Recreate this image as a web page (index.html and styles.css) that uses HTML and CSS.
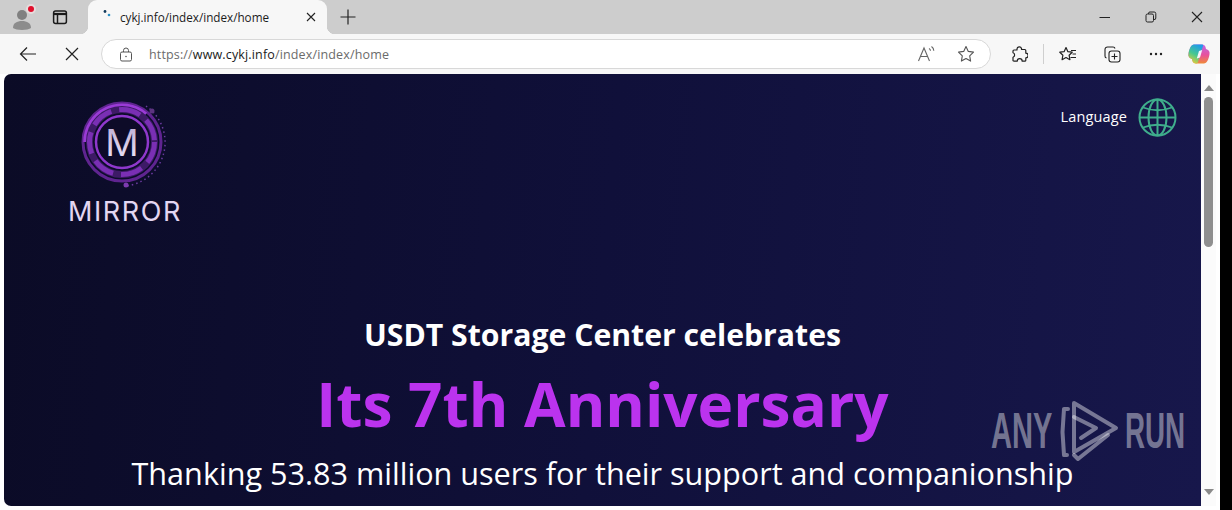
FILE: index.html
```html
<!DOCTYPE html>
<html lang="en">
<head>
<meta charset="utf-8">
<title>cykj.info/index/index/home</title>
<link rel="stylesheet" href="styles.css">
</head>
<body>
<div class="window">
  <div class="tabstrip">
    <div class="btn avatar-btn">
      <svg width="30" height="30" viewBox="0 0 30 30"><circle cx="15" cy="13" r="5" fill="#808080"/><path d="M6 26c0-5 4-7 9-7s9 2 9 7c-3 2.500-15 2.500-18 0z" fill="#8c8c8c"/><circle cx="24" cy="7" r="5" fill="#e6dcdc"/><circle cx="24" cy="7" r="3" fill="#e0102c"/></svg>
    </div>
    <div class="btn panel-btn">
      <svg width="16" height="16" viewBox="0 0 16 16" fill="none" stroke="#1a1a1a" stroke-width="1.500"><rect x="1.600" y="2" width="12.800" height="12.400" rx="2"/><path d="M1.600 5h12.800" stroke-width="2.200"/><path d="M5.500 5v9"/></svg>
    </div>
    <div class="tab">
      <svg class="favicon" width="12" height="12" viewBox="0 0 12 12"><circle cx="3" cy="2.500" r="1.400" fill="#123a5c"/><circle cx="7" cy="6" r="1.300" fill="#2a8fc4"/></svg>
      <span class="tab-title">cykj.info/index/index/home</span>
      <svg class="tab-close" width="10" height="10" viewBox="0 0 10 10" stroke="#222" stroke-width="1.100"><path d="M1 1l8 8M9 1l-8 8"/></svg>
    </div>
    <div class="btn newtab-btn">
      <svg width="16" height="16" viewBox="0 0 16 16" stroke="#222" stroke-width="1.200"><path d="M8 .5v15M.5 8h15"/></svg>
    </div>
    <div class="spacer"></div>
    <div class="winctl"><svg width="12" height="12" viewBox="0 0 12 12" stroke="#222"><path d="M.5 6.500h10.500"/></svg></div>
    <div class="winctl"><svg width="12" height="12" viewBox="0 0 12 12" fill="none" stroke="#222"><rect x="1" y="3" width="7.500" height="8" rx="1.500"/><path d="M3.500 3V2.200A1.400 1.400 0 0 1 5 1h4.200A1.600 1.600 0 0 1 10.800 2.600V7A1.500 1.500 0 0 1 9 8.500"/></svg></div>
    <div class="winctl"><svg width="12" height="12" viewBox="0 0 12 12" stroke="#222" stroke-width="1.100"><path d="M1 1l10 10M11 1L1 11"/></svg></div>
  </div>

  <div class="toolbar">
    <div class="btn tool">
      <svg width="18" height="16" viewBox="0 0 18 16" fill="none" stroke="#222" stroke-width="1.200"><path d="M17 8H1.500M8 1.500L1.500 8 8 14.500"/></svg>
    </div>
    <div class="btn tool">
      <svg width="14" height="14" viewBox="0 0 14 14" stroke="#222" stroke-width="1.200"><path d="M1 1l12 12M13 1L1 13"/></svg>
    </div>
    <div class="address">
      <svg class="lock" width="14" height="15" viewBox="0 0 14 15" fill="none" stroke="#555"><rect x="1.500" y="5" width="11" height="9" rx="1.500"/><path d="M4.500 5V3.500a2.500 2.500 0 0 1 5 0V5"/><circle cx="7" cy="9.500" r=".8" fill="#555" stroke="none"/></svg>
      <span class="url"><span class="url-dim">https://</span><span class="url-host">www.cykj.info</span><span class="url-dim">/index/index/home</span></span>
      <svg class="read" width="20" height="18" viewBox="0 0 20 18" fill="none" stroke="#666" stroke-width="1.100"><path d="M1.500 16L7 3l5.500 13M3.500 11.500h7"/><path d="M12 3.500c1 .5 1.500 1.300 1.500 2.300M14.500 1.500c1.500 1 2.300 2.500 2.300 4.300"/></svg>
      <svg class="fav" width="18" height="18" viewBox="0 0 18 18" fill="none" stroke="#555" stroke-width="1.100"><path d="M9 1.500l2.300 4.900 5.200.7-3.800 3.700.9 5.300L9 13.500l-4.600 2.600.9-5.300L1.500 7.100l5.200-.7z" stroke-linejoin="round"/></svg>
    </div>
    <div class="btn tool ext">
      <svg width="17" height="17" viewBox="0 0 17 17" fill="none" stroke="#222" stroke-width="1.200" stroke-linejoin="round"><path d="M6 3a2.300 2.300 0 0 1 4.500-.5c.1.400.1.600 0 1h3.300c.6 0 1 .4 1 1v2.700a2.300 2.300 0 0 1 0 4.600v2.400c0 .6-.4 1-1 1h-2.600a2.500 2.500 0 0 0-5 0H3c-.6 0-1-.4-1-1v-3a2.300 2.300 0 0 0 0-4.400V5c0-.6.400-1 1-1h3z"/></svg>
    </div>
    <div class="divider"></div>
    <div class="btn tool">
      <svg width="18" height="17" viewBox="0 0 18 17" fill="none" stroke="#222" stroke-width="1.200" stroke-linejoin="round"><path d="M7 1.500l1.900 4.200 4.300.5-3.100 3 .8 4.500L7 11.500l-3.900 2.200.8-4.500-3.100-3 4.300-.5z"/><path d="M12 4.500h5M13.500 8h3.500M11.500 11.500H17" stroke-width="1"/></svg>
    </div>
    <div class="btn tool">
      <svg width="17" height="17" viewBox="0 0 17 17" fill="none" stroke="#222" stroke-width="1.100"><path d="M2.500 12A2 2 0 0 1 1 10V3.500A2.500 2.500 0 0 1 3.500 1H9a2 2 0 0 1 2 1.500"/><rect x="5" y="5" width="11" height="11" rx="2.500"/><path d="M10.500 7.500v6M7.500 10.500h6"/></svg>
    </div>
    <div class="btn tool">
      <svg width="14" height="4" viewBox="0 0 14 4" fill="#222"><circle cx="2" cy="2" r="1.200"/><circle cx="7" cy="2" r="1.200"/><circle cx="12" cy="2" r="1.200"/></svg>
    </div>
    <div class="btn copilot">
      <svg width="22" height="22" viewBox="0 0 22 22">
        <defs>
          <linearGradient id="cpa" x1="0.600" y1="0" x2="0.200" y2="1"><stop offset="0" stop-color="#1f9be8"/><stop offset=".5" stop-color="#46c890"/><stop offset="1" stop-color="#f2cf30"/></linearGradient>
          <linearGradient id="cpb" x1="0.500" y1="0" x2="0.500" y2="1"><stop offset="0" stop-color="#b86ae8"/><stop offset=".55" stop-color="#e8509c"/><stop offset="1" stop-color="#f08a38"/></linearGradient>
        </defs>
        <path d="M7 1.500h7c2 0 3 1 3.500 2.500L18 6c2.500 .5 4 2.500 3.500 5-.5 4-2 8-4 9-1 .5-2 .5-3 .5H8c-2 0-3-1-3.500-2.500L4 16C1.500 15.500 0 13.500 .5 11c.5-4 2-8 4-9 1-.5 1.500-.5 2.500-.5z" fill="url(#cpb)"/>
        <path d="M7 1.500h7c1 0 1.300 .6 1 1.500L10 19c-.4 1-1 1.500-2 1.500-2 0-3-1-3.500-2.500L4 16C1.500 15.500 0 13.500 .5 11c.5-4 2-8 4-9 1-.5 1.500-.5 2.500-.5z" fill="url(#cpa)"/>
        <path d="M11 8l3.200-1-2.200 7.500-3.200 1z" fill="#f7f4fc"/>
      </svg>
    </div>
  </div>

  <div class="content">
    <main class="page">
      <header class="page-head">
        <div class="brand">
          <svg class="emblem" width="92" height="92" viewBox="0 0 92 92" fill="none">
            <defs>
              <linearGradient id="mgrad" x1="0" y1="0" x2="0" y2="1"><stop offset="0" stop-color="#b8a6cf"/><stop offset="1" stop-color="#f1e9fa"/></linearGradient>
            </defs>
            <circle cx="42" cy="45" r="39" stroke="#5f2490" stroke-width="3"/>
            <path d="M5 45A37 37 0 0 1 66 17" stroke="#9a3bd6" stroke-width="3.500"/>
            <circle cx="42" cy="45" r="32.500" stroke="#3d1a66" stroke-width="7"/>
            <circle cx="42" cy="45" r="32.500" stroke="#7a2fb4" stroke-width="5" stroke-dasharray="22 8"/>
            <circle cx="42" cy="45" r="26" fill="#0d0b28" stroke="#8f38cc" stroke-width="2.500"/>
            <text x="42" y="58.500" class="emblem-m" fill="url(#mgrad)">M</text>
            <path d="M66 9A44 44 0 0 1 46 89" stroke="#6a3a9e" stroke-width="1.500" stroke-dasharray="1.500 3"/>
            <circle cx="72" cy="14" r="2.500" fill="#5c3480"/>
            <circle cx="46" cy="88" r="2.500" fill="#7c3bb0"/>
          </svg>
          <div class="brand-name">MIRROR</div>
        </div>
        <div class="lang">
          <span class="lang-text">Language</span>
          <svg width="39" height="39" viewBox="0 0 39 39" fill="none" stroke="#3fae8c" stroke-width="2"><circle cx="19.500" cy="19.500" r="18"/><ellipse cx="19.500" cy="19.500" rx="9" ry="18"/><path d="M19.500 1.500v36M1.500 19.500h36"/><path d="M5 9.500Q19.500 15 34 9.500M5 29.500Q19.500 24 34 29.500" stroke-width="1.800"/></svg>
        </div>
      </header>
      <section class="hero">
        <h1 class="hero-top">USDT Storage Center celebrates</h1>
        <h2 class="hero-main">Its 7th Anniversary</h2>
        <p class="hero-sub">Thanking 53.83 million users for their support and companionship</p>
      </section>
      <div class="watermark">
        <span class="wm-text wm-any">ANY</span>
        <svg class="wm-icon" width="60" height="64" viewBox="0 0 60 64" fill="none" stroke="#fff" stroke-opacity=".42" stroke-width="4" stroke-linejoin="round" stroke-linecap="round"><path d="M8 10H4L2.500 33 4 56h3"/><path d="M14 4L56 29 14 53z"/><path d="M14 18L36 29 21 39"/><path d="M48 36L18 60 14 56"/></svg>
        <span class="wm-text wm-run">RUN</span>
      </div>
    </main>
    <div class="scrollbar">
      <div class="arrow-up"></div>
      <div class="thumb"></div>
      <div class="track"></div>
      <div class="arrow-down"></div>
    </div>
  </div>
</div>
</body>
</html>
```
FILE: styles.css
```css
* { box-sizing: border-box; }
html, body { margin: 0; height: 100%; overflow: hidden; background: #000; }
body { font-family: "Open Sans", "Noto Sans", sans-serif; }
.window { width: 1220px; height: 510px; display: flex; flex-direction: column; background: #f7f7f7; }

.tabstrip { flex: 0 0 34px; display: flex; align-items: center; background: #cdcdcd; }
.btn { display: flex; align-items: center; justify-content: center; height: 100%; }
.avatar-btn { width: 44px; }
.panel-btn { width: 32px; }
.newtab-btn { width: 42px; }
.spacer { flex: 1; }
.winctl { width: 46px; height: 100%; display: flex; align-items: center; justify-content: center; }
.tab { position: relative; flex: 0 0 239px; height: 100%; margin-left: 12px; display: flex; align-items: center; background: #f7f7f7; border-radius: 9px 9px 0 0; padding: 0 11px 0 14px; }
.tab::before, .tab::after { content: ""; position: absolute; bottom: 0; width: 8px; height: 8px; }
.tab::before { left: -8px; background: radial-gradient(circle at 0 0, transparent 8px, #f7f7f7 8.500px); }
.tab::after { right: -8px; background: radial-gradient(circle at 100% 0, transparent 8px, #f7f7f7 8.500px); }
.favicon { margin-top: -5px; }
.tab-title { margin-left: 6px; font-size: 11.700px; color: #1c1c1c; white-space: nowrap; flex: 1; }

.toolbar { flex: 0 0 40px; display: flex; align-items: center; padding-left: 6px; background: #f7f7f7; }
.tool { width: 44px; }
.copilot { width: 42px; }
.address { flex: 0 0 890px; height: 30px; margin-left: 7px; display: flex; align-items: center; background: #fff; border: 1px solid #d8d8d8; border-radius: 15px; padding: 0 15px 0 17px; }
.url { flex: 1; margin-left: 16px; font-size: 12.500px; white-space: nowrap; letter-spacing: .012em; }
.url-dim { color: #6b6b6b; }
.url-host { color: #1a1a1a; }
.read { margin-right: 20px; }
.ext { margin-left: 6px; }
.divider { width: 1px; height: 20px; margin: 0 2px; background: #cfcfcf; }

.content { flex: 1; display: flex; padding: 0 4px 4px; background: #fff; min-height: 0; }
.page { position: relative; flex: 0 0 1197px; overflow: hidden; border-radius: 7px 0 0 7px; background: linear-gradient(95deg, #0b0b26 0%, #10103a 50%, #17174b 100%); color: #fff; }
.page-head { display: flex; justify-content: space-between; align-items: flex-start; padding: 23px 24px 0 64px; height: 151px; }
.brand { display: flex; flex-direction: column; align-items: center; width: 114px; }
.emblem { display: block; margin-left: 2px; }
.emblem-m { font-family: "Inter", sans-serif; font-size: 37px; font-weight: 400; text-anchor: middle; }
.brand-name { margin-top: 9px; font-family: "Inter", sans-serif; font-size: 27px; font-weight: 400; line-height: 28px; color: #e3d6f2; letter-spacing: .06em; white-space: nowrap; }
.lang { display: flex; align-items: center; gap: 11px; margin-top: 1px; }
.lang-text { font-size: 14.500px; color: #fff; letter-spacing: .01em; margin-top: -2px; }

.hero { display: flex; flex-direction: column; align-items: center; padding-top: 90px; white-space: nowrap; }
.hero-top { margin: 0; font-size: 30.200px; line-height: 40px; font-weight: 700; }
.hero-main { margin: 14px 0 0; font-size: 60.300px; line-height: 70px; font-weight: 700; color: #bb33ee; }
.hero-sub { margin: 12px 0 0; font-size: 30.600px; line-height: 44px; font-weight: 400; }

.watermark { position: absolute; left: 987px; top: 325px; width: 192px; height: 64px; display: flex; align-items: center; }
.wm-text { display: block; width: 63px; font-family: "Liberation Sans", sans-serif; font-weight: 700; font-size: 50px; line-height: 40px; color: rgba(255,255,255,.42); transform-origin: left center; white-space: nowrap; overflow: visible; }
.wm-any { transform: scaleX(.58); }
.wm-run { transform: scaleX(.555); margin-left: 5px; width: 60px; }
.wm-icon { flex: 0 0 60px; margin-left: 6px; }

.scrollbar { flex: 0 0 15px; display: flex; flex-direction: column; align-items: center; background: #fbfbfb; }
.arrow-up { margin-top: 11px; width: 0; height: 0; border: 5px solid transparent; border-top: 0; border-bottom: 6px solid #8a8a8a; }
.thumb { margin-top: 6px; width: 9px; height: 150px; border-radius: 5px; background: #8f8f8f; }
.track { flex: 1; }
.arrow-down { margin-bottom: 11px; width: 0; height: 0; border: 5px solid transparent; border-bottom: 0; border-top: 6px solid #8a8a8a; }
```
